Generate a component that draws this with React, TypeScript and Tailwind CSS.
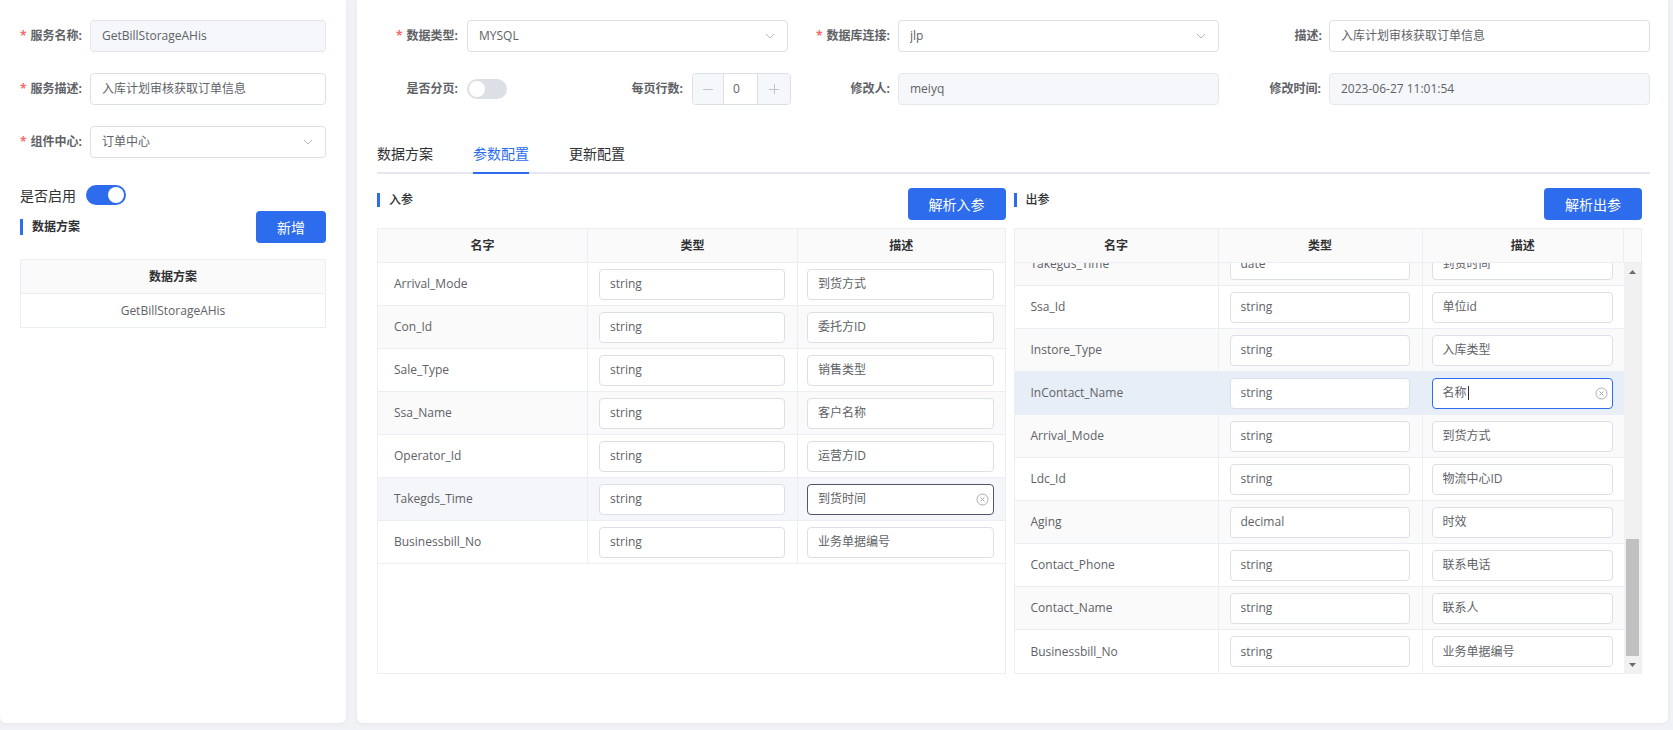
import React from 'react';

const Chevron = () => (
  <svg width="10" height="6" viewBox="0 0 10 6" className="shrink-0">
    <path d="M1 1l4 4 4-4" fill="none" stroke="#b4b8bf" strokeWidth="1" />
  </svg>
);

const ClearIcon = () => (
  <svg width="13" height="13" viewBox="0 0 13 13" className="shrink-0">
    <circle cx="6.5" cy="6.5" r="5.5" fill="none" stroke="#a8abb2" strokeWidth="1" />
    <path d="M4.5 4.5l4 4M8.5 4.5l-4 4" stroke="#a8abb2" strokeWidth="1" />
  </svg>
);

function TextBox({ value, disabled, select, className = '' }: { value: string; disabled?: boolean; select?: boolean; className?: string }) {
  return (
    <div
      className={`h-[32px] rounded-[4px] border flex items-center pl-[11px] pr-[12px] text-[12px] text-[#606266] ${
        disabled ? 'bg-[#f5f7fa] border-[#e4e7ed]' : 'bg-white border-[#dcdfe6]'
      } ${className}`}
    >
      <span className="flex-1 truncate">{value}</span>
      {select && <Chevron />}
    </div>
  );
}

function Toggle({ on }: { on?: boolean }) {
  return (
    <div className={`w-[40px] h-[20px] rounded-full p-[2px] flex shrink-0 ${on ? 'bg-[#2c6ced] justify-end' : 'bg-[#dcdfe6] justify-start'}`}>
      <div className="w-[16px] h-[16px] rounded-full bg-white" />
    </div>
  );
}

function Label({ text, required, className = '' }: { text: string; required?: boolean; className?: string }) {
  return (
    <div className={`shrink-0 text-[12px] font-bold text-[#606266] whitespace-nowrap ${className}`}>
      {required && <span className="text-[#f56c6c] mr-[4px]">*</span>}
      {text}
    </div>
  );
}

function CellInput({ value, state = 'normal' }: { value: string; state?: 'normal' | 'dark' | 'blue' }) {
  const border = state === 'dark' ? 'border-[#4f566b]' : state === 'blue' ? 'border-[#2c6ced]' : 'border-[#dcdfe6]';
  const pr = state === 'normal' ? 'pr-[10px]' : 'pr-[4px]';
  return (
    <div className={`h-[31px] w-full rounded-[4px] border bg-white flex items-center pl-[10px] ${pr} text-[12px] text-[#606266] ${border}`}>
      <span className="flex-1 truncate flex items-center">
        {value}
        {state === 'blue' && <span className="inline-block w-px h-[14px] bg-[#303133] ml-px" />}
      </span>
      {state !== 'normal' && <ClearIcon />}
    </div>
  );
}

function SectionTitle({ text }: { text: string }) {
  return (
    <div className="flex items-center h-[24px] self-start">
      <div className="w-[3px] h-[14px] bg-[#2c6ced]" />
      <span className="ml-[9px] text-[12px] text-[#303133] font-medium">{text}</span>
    </div>
  );
}

function BlueButton({ text, className = '' }: { text: string; className?: string }) {
  return (
    <div className={`h-[32px] rounded-[4px] bg-[#2c6ced] text-white text-[14px] flex items-center justify-center ${className}`}>{text}</div>
  );
}

const inRows: [string, string, string][] = [
  ['Arrival_Mode', 'string', '到货方式'],
  ['Con_Id', 'string', '委托方ID'],
  ['Sale_Type', 'string', '销售类型'],
  ['Ssa_Name', 'string', '客户名称'],
  ['Operator_Id', 'string', '运营方ID'],
  ['Takegds_Time', 'string', '到货时间'],
  ['Businessbill_No', 'string', '业务单据编号'],
];

const outRows: [string, string, string][] = [
  ['Takegds_Time', 'date', '到货时间'],
  ['Ssa_Id', 'string', '单位id'],
  ['Instore_Type', 'string', '入库类型'],
  ['InContact_Name', 'string', '名称'],
  ['Arrival_Mode', 'string', '到货方式'],
  ['Ldc_Id', 'string', '物流中心ID'],
  ['Aging', 'decimal', '时效'],
  ['Contact_Phone', 'string', '联系电话'],
  ['Contact_Name', 'string', '联系人'],
  ['Businessbill_No', 'string', '业务单据编号'],
];

function HeaderCell({ text, last }: { text: string; last?: boolean }) {
  return (
    <div className={`flex items-center justify-center text-[12px] font-bold text-[#303133] ${last ? '' : 'border-r border-[#ebeef5]'}`}>{text}</div>
  );
}

function InTable() {
  return (
    <div className="h-[446px] border border-[#ebeef5] flex flex-col">
      <div className="h-[34px] shrink-0 grid grid-cols-[210px_210px_1fr] bg-[#fafafa] border-b border-[#ebeef5]">
        <HeaderCell text="名字" />
        <HeaderCell text="类型" />
        <HeaderCell text="描述" last />
      </div>
      <div className="flex-1 flex flex-col">
        {inRows.map(([n, t, d], i) => {
          const bg = i === 5 ? 'bg-[#f4f6fa]' : i % 2 === 1 ? 'bg-[#fafafa]' : 'bg-white';
          return (
            <div key={n} className={`h-[43px] shrink-0 grid grid-cols-[210px_210px_1fr] border-b border-[#ebeef5] ${bg}`}>
              <div className="flex items-center pl-[16px] text-[12px] text-[#606266] border-r border-[#ebeef5]">{n}</div>
              <div className="flex items-center pl-[11px] pr-[12px] border-r border-[#ebeef5]">
                <CellInput value={t} />
              </div>
              <div className="flex items-center pl-[9px] pr-[11px]">
                <CellInput value={d} state={i === 5 ? 'dark' : 'normal'} />
              </div>
            </div>
          );
        })}
      </div>
    </div>
  );
}

function OutTable() {
  return (
    <div className="h-[446px] border border-[#ebeef5] flex flex-col">
      <div className="h-[34px] shrink-0 grid grid-cols-[204px_204px_1fr_17px] bg-[#fafafa] border-b border-[#ebeef5]">
        <HeaderCell text="名字" />
        <HeaderCell text="类型" />
        <HeaderCell text="描述" />
        <div />
      </div>
      <div className="flex-1 min-h-0 flex">
        <div className="flex-1 min-w-0 overflow-hidden flex flex-col justify-end">
          {outRows.map(([n, t, d], i) => {
            const bg = i === 3 ? 'bg-[#e8eef7]' : i % 2 === 0 ? 'bg-[#fafafa]' : 'bg-white';
            const last = i === outRows.length - 1;
            return (
              <div key={n} className={`h-[43px] shrink-0 grid grid-cols-[204px_204px_1fr] ${last ? '' : 'border-b border-[#ebeef5]'} ${bg}`}>
                <div className="flex items-center pl-[16px] text-[12px] text-[#606266] border-r border-[#ebeef5]">{n}</div>
                <div className="flex items-center pl-[11px] pr-[12px] border-r border-[#ebeef5]">
                  <CellInput value={t} />
                </div>
                <div className="flex items-center pl-[9px] pr-[11px]">
                  <CellInput value={d} state={i === 3 ? 'blue' : 'normal'} />
                </div>
              </div>
            );
          })}
        </div>
        <div className="w-[17px] shrink-0 bg-[#f1f1f1] flex flex-col">
          <div className="h-[17px] flex items-center justify-center">
            <svg width="7" height="4" viewBox="0 0 7 4"><path d="M0 4L3.5 0L7 4Z" fill="#6b6b6b" /></svg>
          </div>
          <div className="flex-1 flex flex-col justify-end px-[2px]">
            <div className="h-[117px] bg-[#c1c1c1]" />
          </div>
          <div className="h-[17px] flex items-center justify-center">
            <svg width="7" height="4" viewBox="0 0 7 4"><path d="M0 0L3.5 4L7 0Z" fill="#6b6b6b" /></svg>
          </div>
        </div>
      </div>
    </div>
  );
}

function NumberBox() {
  return (
    <div className="h-[32px] w-[99px] shrink-0 rounded-[4px] border border-[#dcdfe6] flex text-[12px] text-[#606266] overflow-hidden">
      <div className="w-[31px] bg-[#f5f7fa] border-r border-[#dcdfe6] flex items-center justify-center">
        <svg width="10" height="10" viewBox="0 0 10 10"><path d="M0 5.5h10" stroke="#c0c4cc" strokeWidth="1" /></svg>
      </div>
      <div className="flex-1 bg-white flex items-center pl-[9px]">0</div>
      <div className="w-[33px] bg-[#f5f7fa] border-l border-[#dcdfe6] flex items-center justify-center">
        <svg width="10" height="10" viewBox="0 0 10 10"><path d="M0 5.5h10M5.5 0v10" stroke="#c0c4cc" strokeWidth="1" /></svg>
      </div>
    </div>
  );
}

export default function App() {
  return (
    <div className="w-[1673px] h-[730px] bg-[#f0f2f5] flex gap-[11px] overflow-hidden font-['Open_Sans','Noto_Sans_CJK_SC',sans-serif]">
      {/* Left panel */}
      <div className="w-[346px] h-[723px] shrink-0 bg-white rounded-b-[6px] shadow-[0_1px_4px_rgba(0,0,0,0.05)] pt-[20px] pl-[20px] pr-[20px] flex flex-col">
        <div className="flex items-center h-[32px]">
          <Label text="服务名称:" required className="w-[70px]" />
          <TextBox value="GetBillStorageAHis" disabled className="flex-1" />
        </div>
        <div className="flex items-center h-[32px] mt-[21px]">
          <Label text="服务描述:" required className="w-[70px]" />
          <TextBox value="入库计划审核获取订单信息" className="flex-1" />
        </div>
        <div className="flex items-center h-[32px] mt-[21px]">
          <Label text="组件中心:" required className="w-[70px]" />
          <TextBox value="订单中心" select className="flex-1" />
        </div>
        <div className="flex items-center h-[20px] mt-[27px]">
          <span className="text-[14px] text-[#303133] mr-[10px]">是否启用</span>
          <Toggle on />
        </div>
        <div className="flex items-center justify-between h-[32px] mt-[6px]">
          <div className="flex items-center">
            <div className="w-[3px] h-[16px] bg-[#2c6ced]" />
            <span className="ml-[9px] text-[12px] font-bold text-[#303133]">数据方案</span>
          </div>
          <BlueButton text="新增" className="w-[70px]" />
        </div>
        <div className="mt-[16px] border border-[#ebeef5]">
          <div className="h-[34px] bg-[#fafafa] border-b border-[#ebeef5] flex items-center justify-center text-[12px] font-bold text-[#303133]">数据方案</div>
          <div className="h-[33px] flex items-center justify-center text-[12px] text-[#606266]">GetBillStorageAHis</div>
        </div>
      </div>

      {/* Right panel */}
      <div className="w-[1311px] h-[723px] shrink-0 bg-white rounded-b-[6px] shadow-[0_1px_4px_rgba(0,0,0,0.05)] pt-[20px] pl-[20px] pr-[18px] flex flex-col">
        <div className="grid grid-cols-3 gap-x-[20px] h-[32px]">
          <div className="flex items-center">
            <Label text="数据类型:" required className="w-[90px] text-right pr-[9px]" />
            <TextBox value="MYSQL" select className="flex-1" />
          </div>
          <div className="flex items-center">
            <Label text="数据库连接:" required className="w-[90px] text-right pr-[8px]" />
            <TextBox value="jlp" select className="flex-1" />
          </div>
          <div className="flex items-center">
            <Label text="描述:" className="w-[90px] text-right pr-[7px]" />
            <TextBox value="入库计划审核获取订单信息" className="flex-1" />
          </div>
        </div>
        <div className="grid grid-cols-3 gap-x-[20px] h-[32px] mt-[21px]">
          <div className="flex items-center">
            <div className="w-[225px] flex items-center shrink-0">
              <Label text="是否分页:" className="w-[90px] text-right pr-[9px]" />
              <Toggle />
            </div>
            <Label text="每页行数:" className="w-[90px] text-right pr-[9px]" />
            <NumberBox />
          </div>
          <div className="flex items-center">
            <Label text="修改人:" className="w-[90px] text-right pr-[8px]" />
            <TextBox value="meiyq" disabled className="flex-1" />
          </div>
          <div className="flex items-center">
            <Label text="修改时间:" className="w-[90px] text-right pr-[8px]" />
            <TextBox value="2023-06-27 11:01:54" disabled className="flex-1" />
          </div>
        </div>

        <div className="mt-[29px] h-[40px] flex gap-[40px] border-b-2 border-[#e4e7ed] text-[14px]">
          <div className="flex items-center text-[#303133]">数据方案</div>
          <div className="flex items-center text-[#2c6ced] border-b-2 border-[#2c6ced] -mb-[2px]">参数配置</div>
          <div className="flex items-center text-[#303133]">更新配置</div>
        </div>

        <div className="mt-[14px] w-[1265px] flex gap-[8px]">
          <div className="flex-1 flex flex-col">
            <div className="h-[32px] flex justify-between">
              <SectionTitle text="入参" />
              <BlueButton text="解析入参" className="w-[98px]" />
            </div>
            <div className="mt-[8px]">
              <InTable />
            </div>
          </div>
          <div className="flex-1 flex flex-col">
            <div className="h-[32px] flex justify-between">
              <SectionTitle text="出参" />
              <BlueButton text="解析出参" className="w-[98px]" />
            </div>
            <div className="mt-[8px]">
              <OutTable />
            </div>
          </div>
        </div>
      </div>
    </div>
  );
}
